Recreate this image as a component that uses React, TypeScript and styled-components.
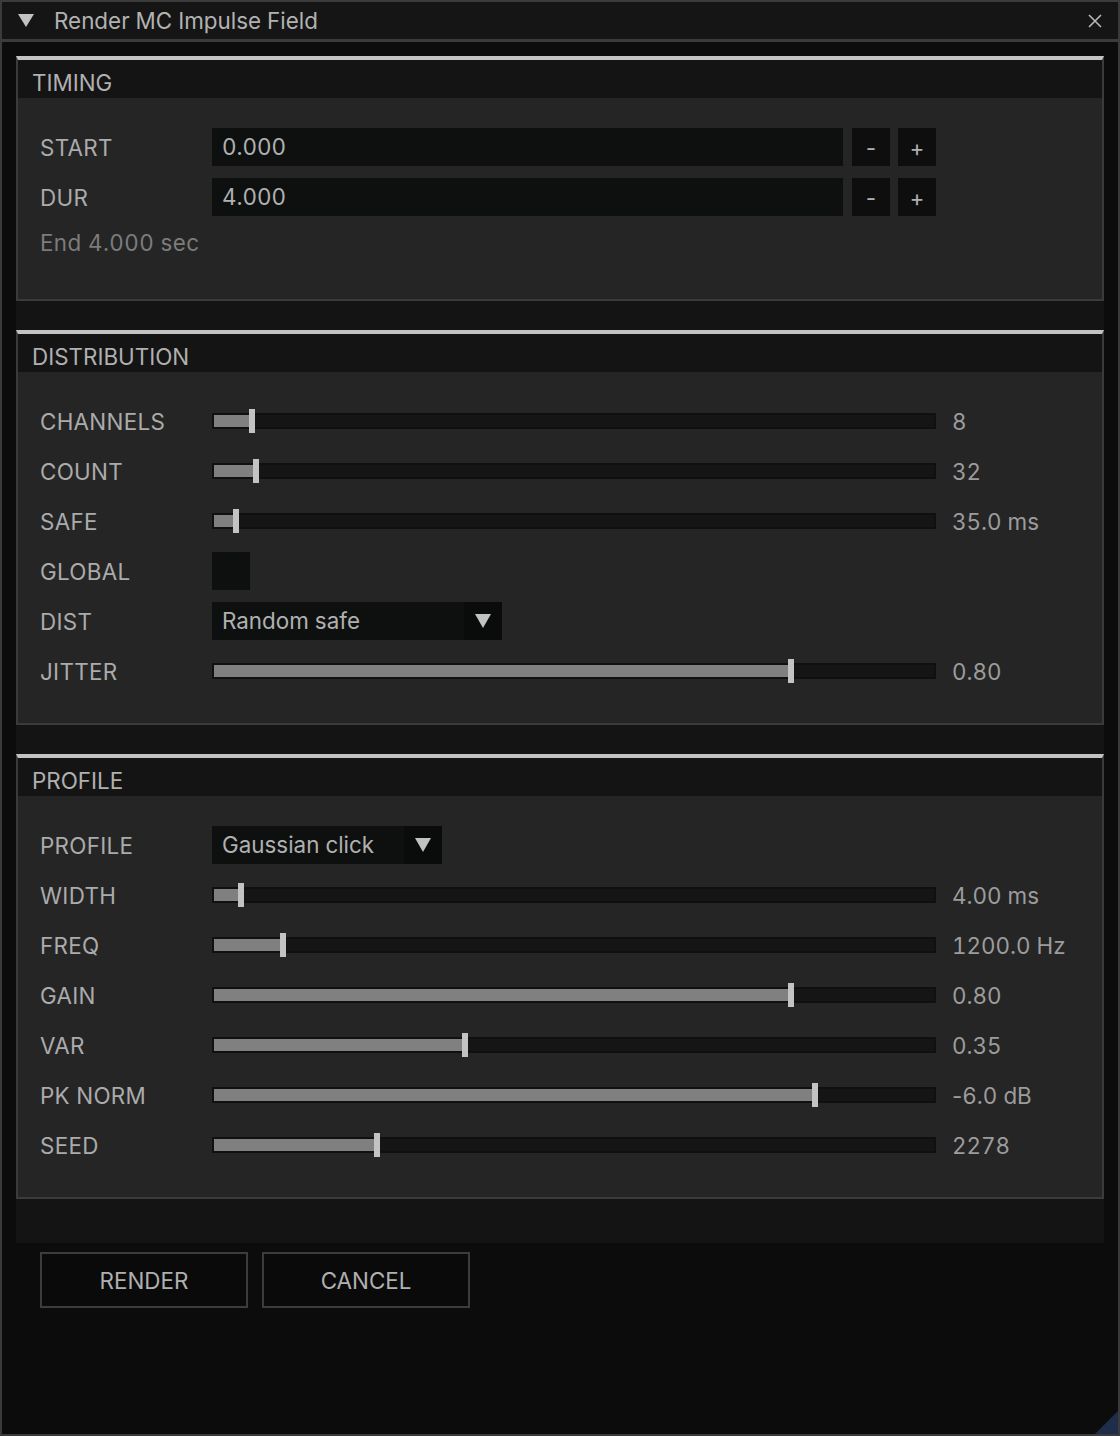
import React from 'react';
import styled, { createGlobalStyle } from 'styled-components';

const GlobalStyle = createGlobalStyle`
  html, body {
    margin: 0;
    padding: 0;
    background: #0c0c0c;
  }
  body {
    font-family: Inter, "Noto Sans", "Liberation Sans", sans-serif;
  }
`;

const Window = styled.div`
  position: relative;
  width: 1120px;
  height: 1436px;
  box-sizing: border-box;
  border: 2px solid #3b3b3b;
  background: #0c0c0c;
  display: flex;
  flex-direction: column;
  color: #ababab;
  font-size: 22.4px;
  font-variant-numeric: tabular-nums;
`;

const TitleBar = styled.div`
  height: 37px;
  display: flex;
  align-items: center;
  background: #151515;
  border-bottom: 3px solid #3b3b3b;
  padding: 0 16px 0 16px;
  color: #b2b2b2;
`;

const TitleText = styled.span`
  flex: 1;
  margin-left: 20px;
`;

const Body = styled.div`
  padding: 14px 14px 0 14px;
  display: flex;
  flex-direction: column;
`;

const Scroll = styled.div`
  background: #141414;
  display: flex;
  flex-direction: column;
  gap: 29px;
  padding-bottom: 44px;
`;

const Section = styled.section`
  border-top: 4px solid #c3c3c3;
  border-left: 2px solid #3b3b3b;
  border-right: 2px solid #3b3b3b;
  border-bottom: 2px solid #3b3b3b;
`;

const SectionHeader = styled.div`
  height: 38px;
  box-sizing: border-box;
  padding: 8px 0 0 14px;
  line-height: 30px;
  background: #141414;
  color: #b0b0b0;
`;

const SectionBody = styled.div`
  background: #252525;
  padding: 30px 0 33px 22px;
  display: flex;
  flex-direction: column;
  gap: 12px;
`;

const Row = styled.div`
  display: flex;
  align-items: center;
  height: 38px;
`;

const Label = styled.span`
  width: 172px;
  flex-shrink: 0;
  color: #ababab;
  letter-spacing: 0.3px;
`;

const Note = styled.div`
  height: 38px;
  line-height: 30px;
  color: #7c7c7c;
  letter-spacing: 0.4px;
`;

const InputBox = styled.div`
  width: 631px;
  height: 38px;
  box-sizing: border-box;
  padding-left: 10px;
  line-height: 38px;
  background: #0e1010;
  color: #b0b0b0;
`;

const StepButton = styled.div<{ $gap: number }>`
  width: 38px;
  height: 38px;
  margin-left: ${(p) => p.$gap}px;
  background: #0e0e0e;
  display: flex;
  align-items: center;
  justify-content: center;
  color: #b0b0b0;
`;

const Track = styled.div`
  position: relative;
  width: 724px;
  height: 16px;
  box-sizing: border-box;
  border: 2px solid #101010;
  background: #151515;
  flex-shrink: 0;
`;

const Fill = styled.div`
  position: absolute;
  left: 0;
  top: 0;
  bottom: 0;
  background: #808080;
`;

const Thumb = styled.div`
  position: absolute;
  top: -6px;
  width: 6px;
  height: 24px;
  background: #c3c3c3;
`;

const Value = styled.span`
  margin-left: 16px;
  color: #9c9c9c;
`;

const Sign = styled.span`
  font-variant-numeric: normal;
`;

const CheckBox = styled.div`
  width: 38px;
  height: 38px;
  background: #0e1010;
`;

const Combo = styled.div<{ $width: number }>`
  width: ${(p) => p.$width}px;
  height: 38px;
  display: flex;
  background: #0e1010;
`;

const ComboText = styled.span`
  flex: 1;
  padding-left: 10px;
  line-height: 38px;
  color: #b0b0b0;
`;

const ComboArrow = styled.div`
  width: 38px;
  height: 38px;
  background: #0a0b0b;
  display: flex;
  align-items: center;
  justify-content: center;
`;

const Footer = styled.div`
  display: flex;
  gap: 14px;
  padding: 9px 0 0 24px;
`;

const FooterButton = styled.div`
  width: 208px;
  height: 56px;
  box-sizing: border-box;
  border: 2px solid #3c3c3c;
  background: #0a0a0a;
  display: flex;
  align-items: center;
  justify-content: center;
  color: #b0b0b0;
`;

const Grip = styled.svg`
  position: absolute;
  right: 0;
  bottom: 0;
`;

const DownTriangle = ({ w, h }: { w: number; h: number }) => (
  <svg width={w} height={h} viewBox={`0 0 ${w} ${h}`}>
    <polygon points={`0,0 ${w},0 ${w / 2},${h}`} fill="#c2c2c2" />
  </svg>
);

const Slider = ({ label, x, value }: { label: string; x: number; value: string }) => (
  <Row>
    <Label>{label}</Label>
    <Track>
      <Fill style={{ width: x - 2 }} />
      <Thumb style={{ left: x - 2 }} />
    </Track>
    <Value>
      {value.startsWith('-') ? (
        <>
          <Sign>-</Sign>
          {value.slice(1)}
        </>
      ) : (
        value
      )}
    </Value>
  </Row>
);

const Stepper = ({ label, value }: { label: string; value: string }) => (
  <Row>
    <Label>{label}</Label>
    <InputBox>{value}</InputBox>
    <StepButton $gap={9}>-</StepButton>
    <StepButton $gap={8}>+</StepButton>
  </Row>
);

const Dropdown = ({ label, value, width }: { label: string; value: string; width: number }) => (
  <Row>
    <Label>{label}</Label>
    <Combo $width={width}>
      <ComboText>{value}</ComboText>
      <ComboArrow>
        <DownTriangle w={16} h={14} />
      </ComboArrow>
    </Combo>
  </Row>
);

const distribution = [
  { label: 'CHANNELS', x: 37, value: '8' },
  { label: 'COUNT', x: 41, value: '32' },
  { label: 'SAFE', x: 21, value: '35.0 ms' },
];

const profile = [
  { label: 'WIDTH', x: 26, value: '4.00 ms' },
  { label: 'FREQ', x: 68, value: '1200.0 Hz' },
  { label: 'GAIN', x: 576, value: '0.80' },
  { label: 'VAR', x: 250, value: '0.35' },
  { label: 'PK NORM', x: 600, value: '-6.0 dB' },
  { label: 'SEED', x: 162, value: '2278' },
];

export default function App() {
  return (
    <>
      <GlobalStyle />
      <Window>
        <TitleBar>
          <DownTriangle w={16} h={13} />
          <TitleText>Render MC Impulse Field</TitleText>
          <svg width="14" height="14" viewBox="0 0 14 14">
            <path d="M1 1 L13 13 M13 1 L1 13" stroke="#b8b8b8" strokeWidth="1.6" />
          </svg>
        </TitleBar>
        <Body>
          <Scroll>
            <Section>
              <SectionHeader>TIMING</SectionHeader>
              <SectionBody>
                <Stepper label="START" value="0.000" />
                <Stepper label="DUR" value="4.000" />
                <Note>End 4.000 sec</Note>
              </SectionBody>
            </Section>
            <Section>
              <SectionHeader>DISTRIBUTION</SectionHeader>
              <SectionBody>
                {distribution.map((s) => (
                  <Slider key={s.label} {...s} />
                ))}
                <Row>
                  <Label>GLOBAL</Label>
                  <CheckBox />
                </Row>
                <Dropdown label="DIST" value="Random safe" width={290} />
                <Slider label="JITTER" x={576} value="0.80" />
              </SectionBody>
            </Section>
            <Section>
              <SectionHeader>PROFILE</SectionHeader>
              <SectionBody>
                <Dropdown label="PROFILE" value="Gaussian click" width={230} />
                {profile.map((s) => (
                  <Slider key={s.label} {...s} />
                ))}
              </SectionBody>
            </Section>
          </Scroll>
          <Footer>
            <FooterButton>RENDER</FooterButton>
            <FooterButton>CANCEL</FooterButton>
          </Footer>
        </Body>
        <Grip width="23" height="23" viewBox="0 0 23 23">
          <polygon points="23,0 23,23 0,23" fill="#1e2e4a" />
        </Grip>
      </Window>
    </>
  );
}
